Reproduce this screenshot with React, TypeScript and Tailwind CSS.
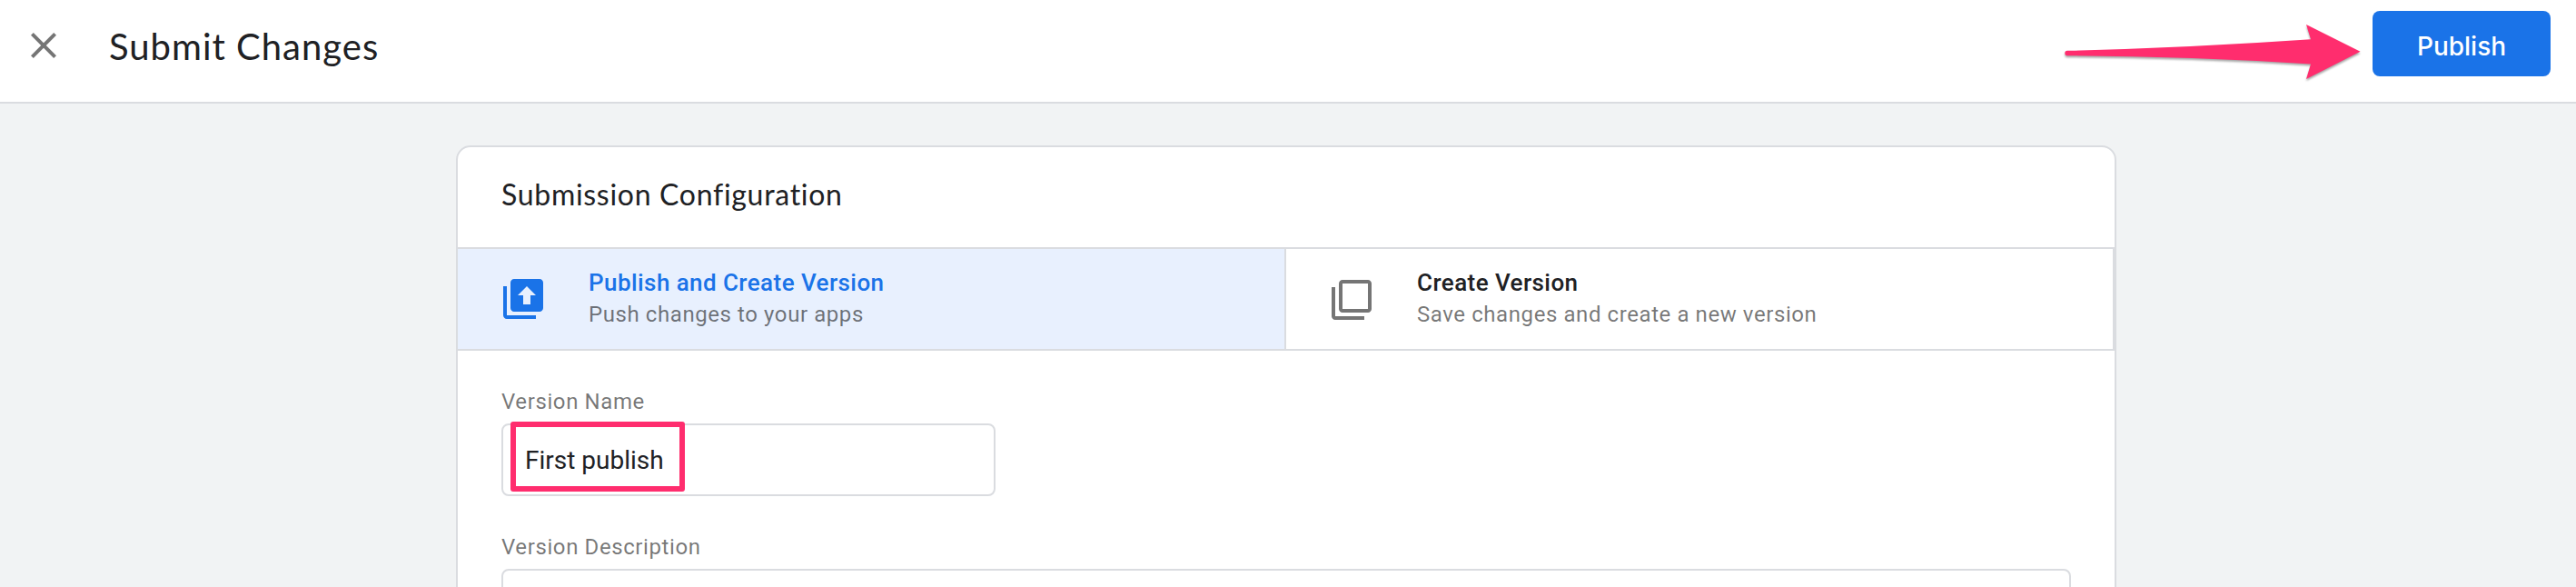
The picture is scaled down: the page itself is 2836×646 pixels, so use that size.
import type { ReactNode } from 'react';

function CloseIcon() {
  return (
    <svg viewBox="0 0 24 24" className="size-12 shrink-0 fill-[#757575]">
      <path d="M19 6.41L17.59 5 12 10.59 6.41 5 5 6.41 10.59 12 5 17.59 6.41 19 12 13.41 17.59 19 19 17.59 13.41 12z" />
    </svg>
  );
}

function PublishVersionIcon() {
  return (
    <svg viewBox="0 0 24 24" className="size-12 shrink-0 fill-[#1a73e8]">
      <path d="M3 5H1v16c0 1.1.9 2 2 2h16v-2H3V5z" />
      <path fillRule="evenodd" d="M7 1h14c1.1 0 2 .9 2 2v14c0 1.1-.9 2-2 2H7c-1.1 0-2-.9-2-2V3c0-1.1.9-2 2-2zM14 5l-5 5h3v5h4v-5h3l-5-5z" />
    </svg>
  );
}

function VersionIcon() {
  return (
    <svg viewBox="0 0 24 24" className="mt-0.5 size-12 shrink-0 fill-[#757575]">
      <path d="M3 5H1v16c0 1.1.9 2 2 2h16v-2H3V5zm18-4H7c-1.1 0-2 .9-2 2v14c0 1.1.9 2 2 2h14c1.1 0 2-.9 2-2V3c0-1.1-.9-2-2-2zm0 16H7V3h14v14z" />
    </svg>
  );
}

function PointerArrow() {
  return (
    <svg viewBox="0 0 340 80" className="mt-[18px] mr-[15px] h-20 w-[340px] shrink-0 overflow-visible fill-[#ff2d6e] drop-shadow-[0_2px_1px_rgba(0,0,0,0.35)]">
      <path d="M19 37.8Q153 34.5 287 25.2L282 9L341.5 38.7L282 69L287 52.4Q153 44 19 43.2A2.7 2.7 0 0 1 19 37.8z" />
    </svg>
  );
}

type OptionProps = { icon: ReactNode; title: string; detail: string; selected?: boolean };

function Option({ icon, title, detail, selected = false }: OptionProps) {
  return (
    <button
      type="button"
      className={`flex h-full flex-1 items-center gap-12 border-r-2 border-[#dadce0] pl-12 text-left ${selected ? 'bg-[#e8f0fe]' : 'bg-white'}`}
    >
      {icon}
      <span className="flex flex-col gap-[3px] pb-px">
        <span className={`text-[26px] leading-8 font-medium tracking-[0.43px] ${selected ? 'text-[#1a73e8]' : 'text-[#202124]'}`}>{title}</span>
        <span className="text-2xl leading-8 tracking-[0.58px] text-black/54">{detail}</span>
      </span>
    </button>
  );
}

export default function App() {
  return (
    <div className="flex h-[646px] flex-col overflow-hidden bg-[#f1f3f4] font-['Roboto',sans-serif] text-[#202124]">
      <header className="flex h-[114px] shrink-0 justify-between border-b-2 border-[#dadce0] bg-white pr-7 pl-6">
        <div className="flex items-center gap-12 pb-3">
          <CloseIcon />
          <h1 className="mt-0.5 font-['Lato',sans-serif] text-[40px] leading-[48px] tracking-[1px]">Submit Changes</h1>
        </div>
        <div className="flex items-start">
          <PointerArrow />
          <button type="button" className="mt-3 flex h-[72px] w-[196px] items-center justify-center rounded-lg bg-[#1a73e8] pt-[5px] font-['Inter',sans-serif] text-[28px] font-medium text-white">
            Publish
          </button>
        </div>
      </header>

      <main className="mt-[46px] ml-[502px] flex h-[600px] w-[1828px] shrink-0 flex-col overflow-hidden rounded-t-2xl border-2 border-[#dadce0] bg-white">
        <div className="flex h-[110px] shrink-0 items-center pb-1.5 pl-12">
          <h2 className="font-['Lato',sans-serif] text-[32px] leading-10 tracking-[0.7px]">Submission Configuration</h2>
        </div>
        <div className="flex h-[114px] shrink-0 border-y-2 border-[#dadce0]">
          <Option selected icon={<PublishVersionIcon />} title="Publish and Create Version" detail="Push changes to your apps" />
          <Option icon={<VersionIcon />} title="Create Version" detail="Save changes and create a new version" />
        </div>
        <form className="flex flex-col gap-10 px-12 pt-10">
          <label className="flex flex-col gap-2">
            <span className="text-2xl leading-8 tracking-[0.6px] text-black/54">Version Name</span>
            <span className="relative flex h-20 w-[544px]">
              <input defaultValue="First publish" className="w-full rounded-lg border-2 border-[#dadce0] px-6 pt-0.5 text-[28px] leading-8 outline-none" />
              <span className="absolute -top-0.5 left-2.5 h-[77px] w-[192px] rounded-[3px] border-6 border-[#ff2d6e]" />
            </span>
          </label>
          <label className="flex flex-col gap-2">
            <span className="text-2xl leading-8 tracking-[0.6px] text-black/54">Version Description</span>
            <textarea className="h-40 w-full resize-none rounded-lg border-2 border-[#dadce0] outline-none" />
          </label>
        </form>
      </main>
    </div>
  );
}
